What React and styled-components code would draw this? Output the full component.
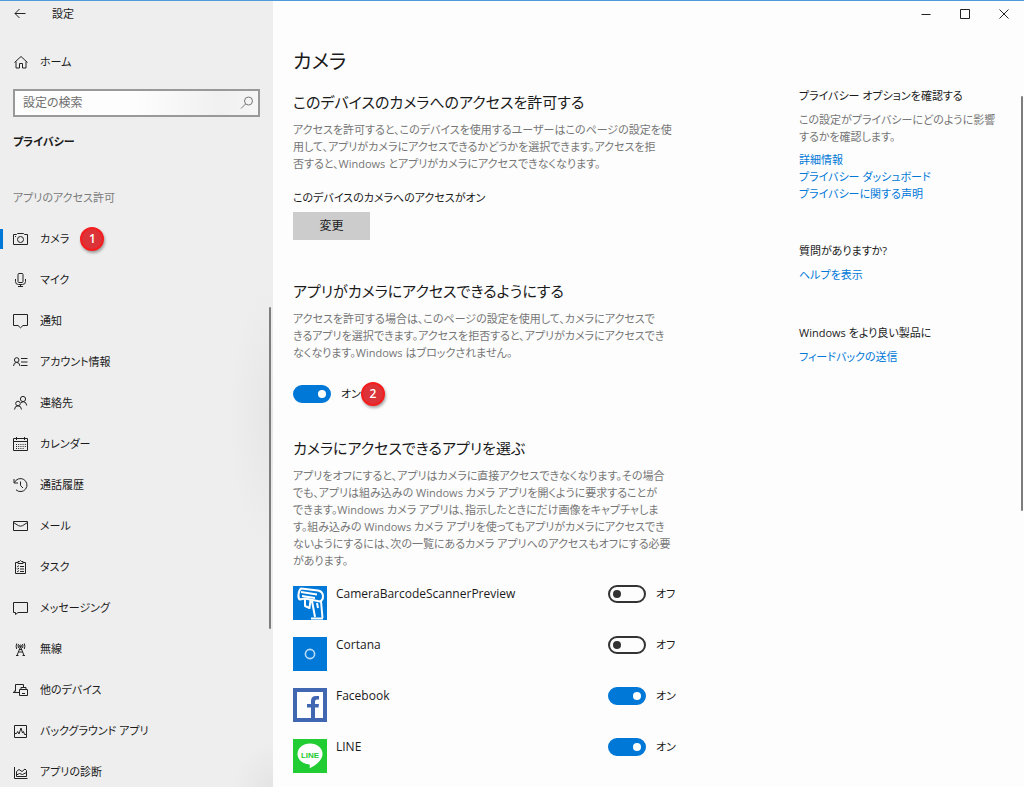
import { useState } from "react";
import styled, { createGlobalStyle } from "styled-components";

const GlobalStyle = createGlobalStyle`
  * {
    box-sizing: border-box;
  }
  body {
    margin: 0;
    background-color: #fdfdfd;
    color: #1a1a1a;
    font-family: "Open Sans", "Noto Sans CJK JP", sans-serif;
    font-size: 11px;
    line-height: 18px;
    font-feature-settings: "palt";
  }
  h1, h2, h3, p, ul {
    margin: 0;
    padding: 0;
    font-weight: 400;
  }
  button, input {
    font: inherit;
    font-feature-settings: inherit;
    color: inherit;
  }
`;

const Window = styled.div`
  display: flex;
  height: 100vh;
  overflow: hidden;
  border-top: 1px solid #4d9bdb;
`;

const Sidebar = styled.aside`
  display: flex;
  flex-direction: column;
  flex: 0 0 273px;
  background: radial-gradient(
      ellipse 44px 130px at 100% 53%,
      #e6e6e6,
      #eeeeee00
    ),
    radial-gradient(ellipse 40px 44px at 100% 100%, #e4e4e4, #eeeeee00),
    #eeeeee;
`;

const TitleBar = styled.header`
  display: flex;
  align-items: center;
  gap: 24px;
  height: 26px;
  padding-left: 12px;
`;

const IconButton = styled.button`
  display: flex;
  padding: 0;
  border: none;
  background: none;
`;

const Icon = styled.svg`
  flex: none;
  width: 16px;
  height: 16px;
  fill: none;
  stroke: #222222;
  stroke-width: 1;
`;

const NavLink = styled.a`
  display: flex;
  align-items: center;
  gap: 11px;
  height: 41px;
  padding: 0 0 1px 13px;
  color: #1a1a1a;
  text-decoration: none;
`;

const HomeLink = styled(NavLink)`
  margin-top: 15px;
`;

const SearchBox = styled.label`
  display: flex;
  align-items: center;
  height: 28px;
  margin: 6px 13px 0;
  padding: 0 3px 0 8px;
  border: 2px solid #999999;
  background: linear-gradient(90deg, #fdfdfd 50%, #f0f0f0 85%, #f6f6f6);
`;

const SearchInput = styled.input`
  flex: 1;
  min-width: 0;
  padding: 0;
  border: none;
  outline: none;
  background: transparent;
  font-size: 12px;
  &::placeholder {
    color: #6e6e6e;
    opacity: 1;
  }
`;

const Category = styled.h2`
  margin: 16px 13px 0;
  font-size: 11px;
  font-weight: 700;
  line-height: 18px;
`;

const GroupLabel = styled.h3`
  margin: 38px 13px 0;
  font-size: 11px;
  line-height: 18px;
  color: #7a7a7a;
`;

const NavArea = styled.div`
  display: flex;
  flex: 1;
  min-height: 0;
  margin-top: 12px;
`;

const NavList = styled.ul`
  flex: 1;
  list-style: none;
`;

const Marker = styled.span`
  width: 3px;
  height: 20px;
  margin: 0 -1px 0 -13px;
  background-color: #0078d7;
`;

const Badge = styled.span`
  display: flex;
  align-items: center;
  justify-content: center;
  width: 24px;
  height: 24px;
  border: 2px solid #f51d1d;
  border-radius: 50%;
  background-color: #dc3338;
  box-shadow: 1px 2px 3px rgba(0, 0, 0, 0.35);
  color: #ffffff;
  font-size: 12px;
  font-weight: 600;
`;

const ScrollThumb = styled.div`
  flex: none;
  width: 2px;
  height: ${(props) => props.$height};
  margin: ${(props) => props.$margin};
  border-radius: 1px;
  background-color: #7d7d7d;
`;

const Main = styled.main`
  display: flex;
  flex-direction: column;
  flex: 1;
  min-width: 0;
  padding-left: 20px;
`;

const WindowControls = styled.div`
  display: flex;
  justify-content: flex-end;
  padding-right: 1px;
`;

const ControlButton = styled(IconButton)`
  align-items: center;
  justify-content: center;
  width: 39px;
  height: 26px;
`;

const PageTitle = styled.h1`
  margin-top: 19px;
  font-size: 20px;
  line-height: 32px;
`;

const Columns = styled.div`
  display: flex;
  align-items: flex-start;
  flex: 1;
  min-height: 0;
  margin-top: 9px;
`;

const Content = styled.div`
  flex: 0 1 383px;
  min-width: 0;
  padding-top: 4px;
`;

const Section = styled.section`
  margin-bottom: ${(props) => props.$bottom};
`;

const SectionTitle = styled.h2`
  margin-bottom: 8px;
  font-size: 15px;
  line-height: 22px;
  white-space: nowrap;
`;

const Description = styled.p`
  color: #767676;
  line-height: 17px;
  white-space: pre;
`;

const Status = styled.p`
  margin: 17px 0 5px;
`;

const ChangeButton = styled.button`
  width: 77px;
  height: 28px;
  padding: 0;
  border: none;
  background-color: #cccccc;
  font-size: 12px;
`;

const ToggleLabel = styled.label`
  display: flex;
  align-items: center;
  gap: 10px;
`;

const ToggleText = styled.span`
  min-width: 20px;
`;

const Switch = styled.input`
  display: flex;
  align-items: center;
  appearance: none;
  width: 38px;
  height: 18px;
  margin: 0;
  padding: 0 3px;
  border: 2px solid #333333;
  border-radius: 9px;
  &::before {
    content: "";
    width: 8px;
    height: 8px;
    border-radius: 50%;
    background-color: #333333;
  }
  &:checked {
    justify-content: flex-end;
    border-color: #0078d7;
    background-color: #0078d7;
  }
  &:checked::before {
    background-color: #ffffff;
  }
`;

const MainToggle = styled.div`
  display: flex;
  align-items: center;
  margin-top: 21px;
`;

const AppList = styled.ul`
  margin-top: 16px;
  list-style: none;
`;

const AppRow = styled.li`
  display: flex;
  align-items: flex-start;
  gap: 9px;
  height: 51px;
`;

const AppName = styled.span`
  flex: 1;
  font-size: 12px;
`;

const AppIcon = styled.svg`
  flex: none;
  width: 34px;
  height: 34px;
  margin-top: 1px;
`;

const Aside = styled.aside`
  flex: 1;
  min-width: 0;
  margin-left: 123px;
`;

const AsideBlock = styled.section`
  margin-bottom: 40px;
`;

const AsideTitle = styled.h3`
  margin-bottom: 6px;
  font-size: 11px;
  line-height: 18px;
`;

const LinkList = styled.div`
  display: flex;
  flex-direction: column;
  align-items: flex-start;
  margin-top: 6px;
`;

const Link = styled.a`
  color: #0078d7;
  line-height: 17px;
  text-decoration: none;
`;

const navItems = [
  {
    label: "カメラ",
    active: true,
    icon: (
      <>
        <path d="M.5 3.5h3l1-1h6l1 1h3v10H.5z" />
        <circle cx="7.5" cy="8.5" r="3" />
        <path d="M2 5.5h1" />
      </>
    ),
  },
  {
    label: "マイク",
    icon: (
      <>
        <rect x="5" y="1.5" width="5" height="9" rx="1" />
        <path d="M2.5 7v2.500q0 3 3 3h4q3 0 3-3V7M7.500 12.500v2M5 14.500h5" />
      </>
    ),
  },
  { label: "通知", icon: <path d="M.5 1.500h14v11H10l-2.500 2.300L5 12.500H.5z" /> },
  {
    label: "アカウント情報",
    icon: (
      <>
        <circle cx="3.700" cy="6" r="2.300" />
        <path d="M.5 12q.3-3.600 3.200-3.600T7 12M8 4.500h6.500M8 8h6.500M8 11.500h6.500" />
      </>
    ),
  },
  {
    label: "連絡先",
    icon: (
      <>
        <circle cx="10" cy="4" r="2.600" />
        <circle cx="5" cy="8.500" r="2.300" />
        <path d="M1.500 14.500q.3-3.700 3.500-3.700t3.500 3.700M8 8q1-1.200 2.400-1.200 3 0 3.300 3.700" />
      </>
    ),
  },
  {
    label: "カレンダー",
    icon: (
      <>
        <path d="M.5 2.500h14v12H.5zM.5 5.500h14M3.500 1v3M11.500 1v3" />
        <path d="M3 8.500h10M3 10.500h10M3 12.500h8" strokeDasharray="1 1.200" />
      </>
    ),
  },
  {
    label: "通話履歴",
    icon: <path d="M1.500 5.500A6.500 6.500 0 1 1 3 12.800M1 2v4h4M7.500 4.500v4l2.500 2.500" />,
  },
  {
    label: "メール",
    icon: <path d="M.5 3.500h14v9H.5zM.5 4.500l5 3.200q2 1 4 0l5-3.200" />,
  },
  {
    label: "タスク",
    icon: (
      <>
        <path d="M5 3.500H2.500v11h10v-11H10M5 2.500h1.500q1-2 2 0H10v2H5z" />
        <path d="M4 7l.7.700L6 6.500M4 9.500l.7.700L6 9M4 12l.7.700L6 11.500M7 7.500h4M7 10h4M7 12.500h4" />
      </>
    ),
  },
  { label: "メッセージング", icon: <path d="M.5 2.500h14v10H5l-2.500 2v-2h-2z" /> },
  {
    label: "無線",
    icon: (
      <>
        <path d="M7.500 5.500L4 14.500M7.500 5.500l3.500 9M5.500 11h4M3 14.500h2.500M9.500 14.500H12M6 8.500h3" />
        <circle cx="7.500" cy="5" r="1" />
        <path d="M5.500 3q-1 2 0 4M9.500 3q1 2 0 4M3.700 2.500q-1.200 2.700 0 5.500M11.300 2.500q1.200 2.700 0 5.500" />
      </>
    ),
  },
  {
    label: "他のデバイス",
    icon: (
      <>
        <path d="M10.500 5V2.500h-8v7M0 10.500h6M2.500 8l-2 2.500" />
        <path d="M6.500 7.500h8v6h-8zM8 7.500v-2h5v2M9 11.500h3" />
      </>
    ),
  },
  {
    label: "バックグラウンド アプリ",
    icon: (
      <>
        <path d="M1.500 2.500h12v12h-12z" />
        <path d="M1.500 10.500h2l1.200-2 1.300 2.500 2-6 1.500 5 1-1.500 1 3h2" />
      </>
    ),
  },
  {
    label: "アプリの診断",
    icon: (
      <>
        <path d="M1.500 3v11.500h13" />
        <path d="M3.500 7.500l2.500-2 3 2 3-2.500 1.500 1.500v6h-10zM3.500 11l3-1.500 3 1 4-2" />
      </>
    ),
  },
];

const apps = [
  {
    id: "scanner",
    name: "CameraBarcodeScannerPreview",
    enabled: false,
    icon: (
      <>
        <rect width="34" height="34" fill="#0078d7" />
        <g fill="none" stroke="#fff" strokeWidth="2" strokeLinejoin="round">
          <path d="M8 2.500l17 2q5 1 5 6 0 4-3 5L12 12.500l-5 1q-2-1-1.500-5Q6 4 8 2.500z" />
          <path d="M8 6l16 2.500M9 10l13 2M12 13v7l4.500 2 1-8M19 15l3 16M28 15l1.500 17M24 17l1 5M18 32.500h12" />
        </g>
      </>
    ),
  },
  {
    id: "cortana",
    name: "Cortana",
    enabled: false,
    icon: (
      <>
        <rect width="34" height="34" fill="#0078d7" />
        <circle cx="17" cy="17" r="4.600" fill="none" stroke="#b9dcf6" strokeWidth="1.600" />
      </>
    ),
  },
  {
    id: "facebook",
    name: "Facebook",
    enabled: true,
    icon: (
      <>
        <rect width="34" height="34" fill="#4267b2" />
        <rect x="4" y="4" width="26" height="26" fill="#fff" />
        <path
          d="M18 30V19.500h-4v-3.500h4V13q0-5 5-5h3v3.500h-2q-2 0-2 2V16h4l-.5 3.500H22V30z"
          fill="#4267b2"
        />
      </>
    ),
  },
  {
    id: "line",
    name: "LINE",
    enabled: true,
    icon: (
      <>
        <rect width="34" height="34" fill="#22cc33" />
        <path
          d="M17 4.500c-7 0-12.500 4.600-12.500 10.500 0 5.300 4.600 9.400 11 10.200 1.700.3 1.500 1 1.100 4 3.600-1.600 12.900-7 12.900-14.200C29.500 9.100 24 4.500 17 4.500z"
          fill="#fff"
        />
        <text
          x="17"
          y="18.500"
          fill="#22cc33"
          fontFamily="Liberation Sans, sans-serif"
          fontSize="8"
          fontWeight="700"
          textAnchor="middle"
        >
          LINE
        </text>
      </>
    ),
  },
];

const Toggle = ({ label, checked, onChange }) => (
  <ToggleLabel>
    <Switch
      type="checkbox"
      role="switch"
      aria-label={label}
      checked={checked}
      onChange={onChange}
    />
    <ToggleText>{checked ? "オン" : "オフ"}</ToggleText>
  </ToggleLabel>
);

const SettingsNav = () => (
  <Sidebar>
    <TitleBar>
      <IconButton type="button" aria-label="戻る">
        <Icon viewBox="0 0 16 16">
          <path d="M13.500 7.500H3M7.500 3L3 7.500 7.500 12" />
        </Icon>
      </IconButton>
      設定
    </TitleBar>
    <HomeLink href="#home">
      <Icon viewBox="0 0 16 16">
        <path d="M1.500 8.500l6.500-6 6.500 6M3 7.500v6.500h3.500V9.500h3V14H13V7.500" />
      </Icon>
      ホーム
    </HomeLink>
    <SearchBox>
      <SearchInput type="text" placeholder="設定の検索" aria-label="設定の検索" />
      <Icon viewBox="0 0 16 16">
        <g stroke="#777">
          <circle cx="9.500" cy="6" r="4" />
          <path d="M6.500 9L2 13.500" />
        </g>
      </Icon>
    </SearchBox>
    <Category>プライバシー</Category>
    <GroupLabel>アプリのアクセス許可</GroupLabel>
    <NavArea>
      <NavList>
        {navItems.map((item) => (
          <li key={item.label}>
            <NavLink href={`#${item.label}`}>
              {item.active && <Marker />}
              <Icon viewBox="0 0 16 16">{item.icon}</Icon>
              {item.label}
              {item.active && <Badge>1</Badge>}
            </NavLink>
          </li>
        ))}
      </NavList>
      <ScrollThumb $height="322px" $margin="88px 2px 0 0" />
    </NavArea>
  </Sidebar>
);

const App = () => {
  const [cameraOn, setCameraOn] = useState(true);
  const [enabled, setEnabled] = useState(
    Object.fromEntries(apps.map((app) => [app.id, app.enabled]))
  );

  const toggleApp = (id) =>
    setEnabled((current) => ({ ...current, [id]: !current[id] }));

  return (
    <>
      <GlobalStyle />
      <Window>
        <SettingsNav />
        <Main>
          <WindowControls>
            <ControlButton type="button" aria-label="最小化">
              <Icon viewBox="0 0 16 16">
                <path d="M3.500 8.500h9" />
              </Icon>
            </ControlButton>
            <ControlButton type="button" aria-label="最大化">
              <Icon viewBox="0 0 16 16">
                <path d="M3.500 3.500h9v9h-9z" />
              </Icon>
            </ControlButton>
            <ControlButton type="button" aria-label="閉じる">
              <Icon viewBox="0 0 16 16">
                <path d="M3.500 3.500l9 9M12.500 3.500l-9 9" />
              </Icon>
            </ControlButton>
          </WindowControls>
          <PageTitle>カメラ</PageTitle>
          <Columns>
            <Content>
              <Section $bottom="40px">
                <SectionTitle>このデバイスのカメラへのアクセスを許可する</SectionTitle>
                <Description>
                  アクセスを許可すると、このデバイスを使用するユーザーはこのページの設定を使
                  <br />
                  用して、アプリがカメラにアクセスできるかどうかを選択できます。アクセスを拒
                  <br />
                  否すると、Windows とアプリがカメラにアクセスできなくなります。
                </Description>
                <Status>このデバイスのカメラへのアクセスがオン</Status>
                <ChangeButton type="button">変更</ChangeButton>
              </Section>
              <Section $bottom="31px">
                <SectionTitle>アプリがカメラにアクセスできるようにする</SectionTitle>
                <Description>
                  アクセスを許可する場合は、このページの設定を使用して、カメラにアクセスで
                  <br />
                  きるアプリを選択できます。アクセスを拒否すると、アプリがカメラにアクセスでき
                  <br />
                  なくなります。Windows はブロックされません。
                </Description>
                <MainToggle>
                  <Toggle
                    label="アプリがカメラにアクセスできるようにする"
                    checked={cameraOn}
                    onChange={() => setCameraOn(!cameraOn)}
                  />
                  <Badge>2</Badge>
                </MainToggle>
              </Section>
              <Section $bottom="0">
                <SectionTitle>カメラにアクセスできるアプリを選ぶ</SectionTitle>
                <Description>
                  アプリをオフにすると、アプリはカメラに直接アクセスできなくなります。その場合
                  <br />
                  でも、アプリは組み込みの Windows カメラ アプリを開くように要求することが
                  <br />
                  できます。Windows カメラ アプリは、指示したときにだけ画像をキャプチャしま
                  <br />
                  す。組み込みの Windows カメラ アプリを使ってもアプリがカメラにアクセスでき
                  <br />
                  ないようにするには、次の一覧にあるカメラ アプリへのアクセスもオフにする必要
                  <br />
                  があります。
                </Description>
                <AppList>
                  {apps.map((app) => (
                    <AppRow key={app.id}>
                      <AppIcon viewBox="0 0 34 34">{app.icon}</AppIcon>
                      <AppName>{app.name}</AppName>
                      <Toggle
                        label={app.name}
                        checked={enabled[app.id]}
                        onChange={() => toggleApp(app.id)}
                      />
                    </AppRow>
                  ))}
                </AppList>
              </Section>
            </Content>
            <Aside>
              <AsideBlock>
                <AsideTitle>プライバシー オプションを確認する</AsideTitle>
                <Description>
                  この設定がプライバシーにどのように影響
                  <br />
                  するかを確認します。
                </Description>
                <LinkList>
                  <Link href="#details">詳細情報</Link>
                  <Link href="#dashboard">プライバシー ダッシュボード</Link>
                  <Link href="#statement">プライバシーに関する声明</Link>
                </LinkList>
              </AsideBlock>
              <AsideBlock>
                <AsideTitle>質問がありますか?</AsideTitle>
                <Link href="#help">ヘルプを表示</Link>
              </AsideBlock>
              <AsideBlock>
                <AsideTitle>Windows をより良い製品に</AsideTitle>
                <Link href="#feedback">フィードバックの送信</Link>
              </AsideBlock>
            </Aside>
            <ScrollThumb $height="415px" $margin="9px 1px 0 0" />
          </Columns>
        </Main>
      </Window>
    </>
  );
};

export default App;
